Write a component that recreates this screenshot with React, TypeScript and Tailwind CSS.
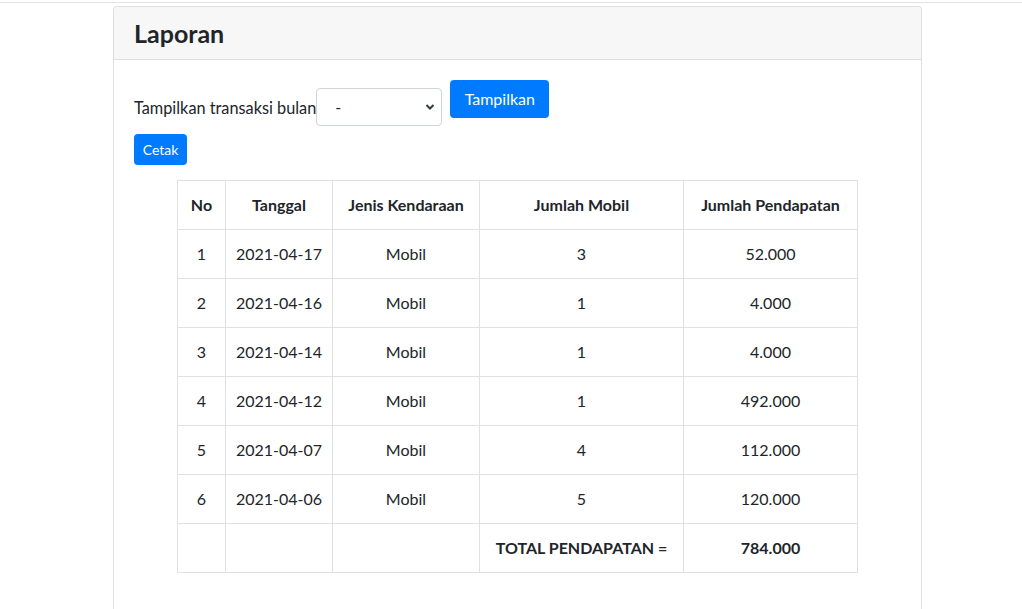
const rows = [
  {no: 1, tanggal: "2021-04-17", jenis: "Mobil", jumlah: 3, pendapatan: "52.000"},
  {no: 2, tanggal: "2021-04-16", jenis: "Mobil", jumlah: 1, pendapatan: "4.000"},
  {no: 3, tanggal: "2021-04-14", jenis: "Mobil", jumlah: 1, pendapatan: "4.000"},
  {no: 4, tanggal: "2021-04-12", jenis: "Mobil", jumlah: 1, pendapatan: "492.000"},
  {no: 5, tanggal: "2021-04-07", jenis: "Mobil", jumlah: 4, pendapatan: "112.000"},
  {no: 6, tanggal: "2021-04-06", jenis: "Mobil", jumlah: 5, pendapatan: "120.000"},
];

const cell = "border border-[#dee2e6] px-2 py-3 text-center align-top whitespace-nowrap";

export default function App() {
  return (
    <div className="min-h-screen bg-white text-[#212529] text-base leading-6" style={{fontFamily: 'Lato, "Noto Sans", sans-serif'}}>
      <div className="pt-[2px]">
        <div className="h-px bg-[#e3e3e3]" />
      </div>
      <div className="ml-[113px] mt-[3px] w-[809px] rounded-t border border-[#dfdfdf] border-b-0">
        <div className="h-[53px] bg-[#f7f7f7] border-b border-[#dfdfdf] px-5 flex items-center rounded-t">
          <h1 className="text-[25px] font-bold leading-none text-[#212529]">Laporan</h1>
        </div>
        <div className="px-5 pt-5 pb-12">
          <form className="flex items-start">
            <span className="mt-[16px] leading-6 text-[16.3px]">Tampilkan transaksi bulan</span>
            <div className="relative mt-[8px] w-[126px] h-[38px] rounded border border-[#ced4da] bg-white flex items-center pl-[18px]">
              <span>-</span>
              <svg className="absolute right-[6px] top-[14px]" width="10" height="8" viewBox="0 0 10 8">
                <path d="M1.5 2 L5 5.5 L8.5 2" fill="none" stroke="#343a40" strokeWidth="2" />
              </svg>
            </div>
            <button type="button" className="ml-[8px] h-[38px] w-[99px] rounded bg-[#007bff] text-white text-[16px]">
              Tampilkan
            </button>
          </form>
          <button type="button" className="mt-[8px] h-[31px] w-[53px] rounded bg-[#007bff] text-white text-[14px]">
            Cetak
          </button>
          <table className="mx-auto mt-[15px] w-[681px] border-collapse table-fixed">
            <thead>
              <tr>
                <th className={`${cell} w-[48px] font-bold`}>No</th>
                <th className={`${cell} w-[107px] font-bold`}>Tanggal</th>
                <th className={`${cell} w-[147px] font-bold`}>Jenis Kendaraan</th>
                <th className={`${cell} w-[204px] font-bold`}>Jumlah Mobil</th>
                <th className={`${cell} font-bold`}>Jumlah Pendapatan</th>
              </tr>
            </thead>
            <tbody>
              {rows.map((r) => (
                <tr key={r.no}>
                  <td className={cell}>{r.no}</td>
                  <td className={cell}>{r.tanggal}</td>
                  <td className={cell}>{r.jenis}</td>
                  <td className={cell}>{r.jumlah}</td>
                  <td className={cell}>{r.pendapatan}</td>
                </tr>
              ))}
              <tr>
                <td className={cell}></td>
                <td className={cell}></td>
                <td className={cell}></td>
                <td className={`${cell} font-bold`}>TOTAL PENDAPATAN =</td>
                <td className={`${cell} font-bold`}>784.000</td>
              </tr>
            </tbody>
          </table>
        </div>
      </div>
    </div>
  );
}
